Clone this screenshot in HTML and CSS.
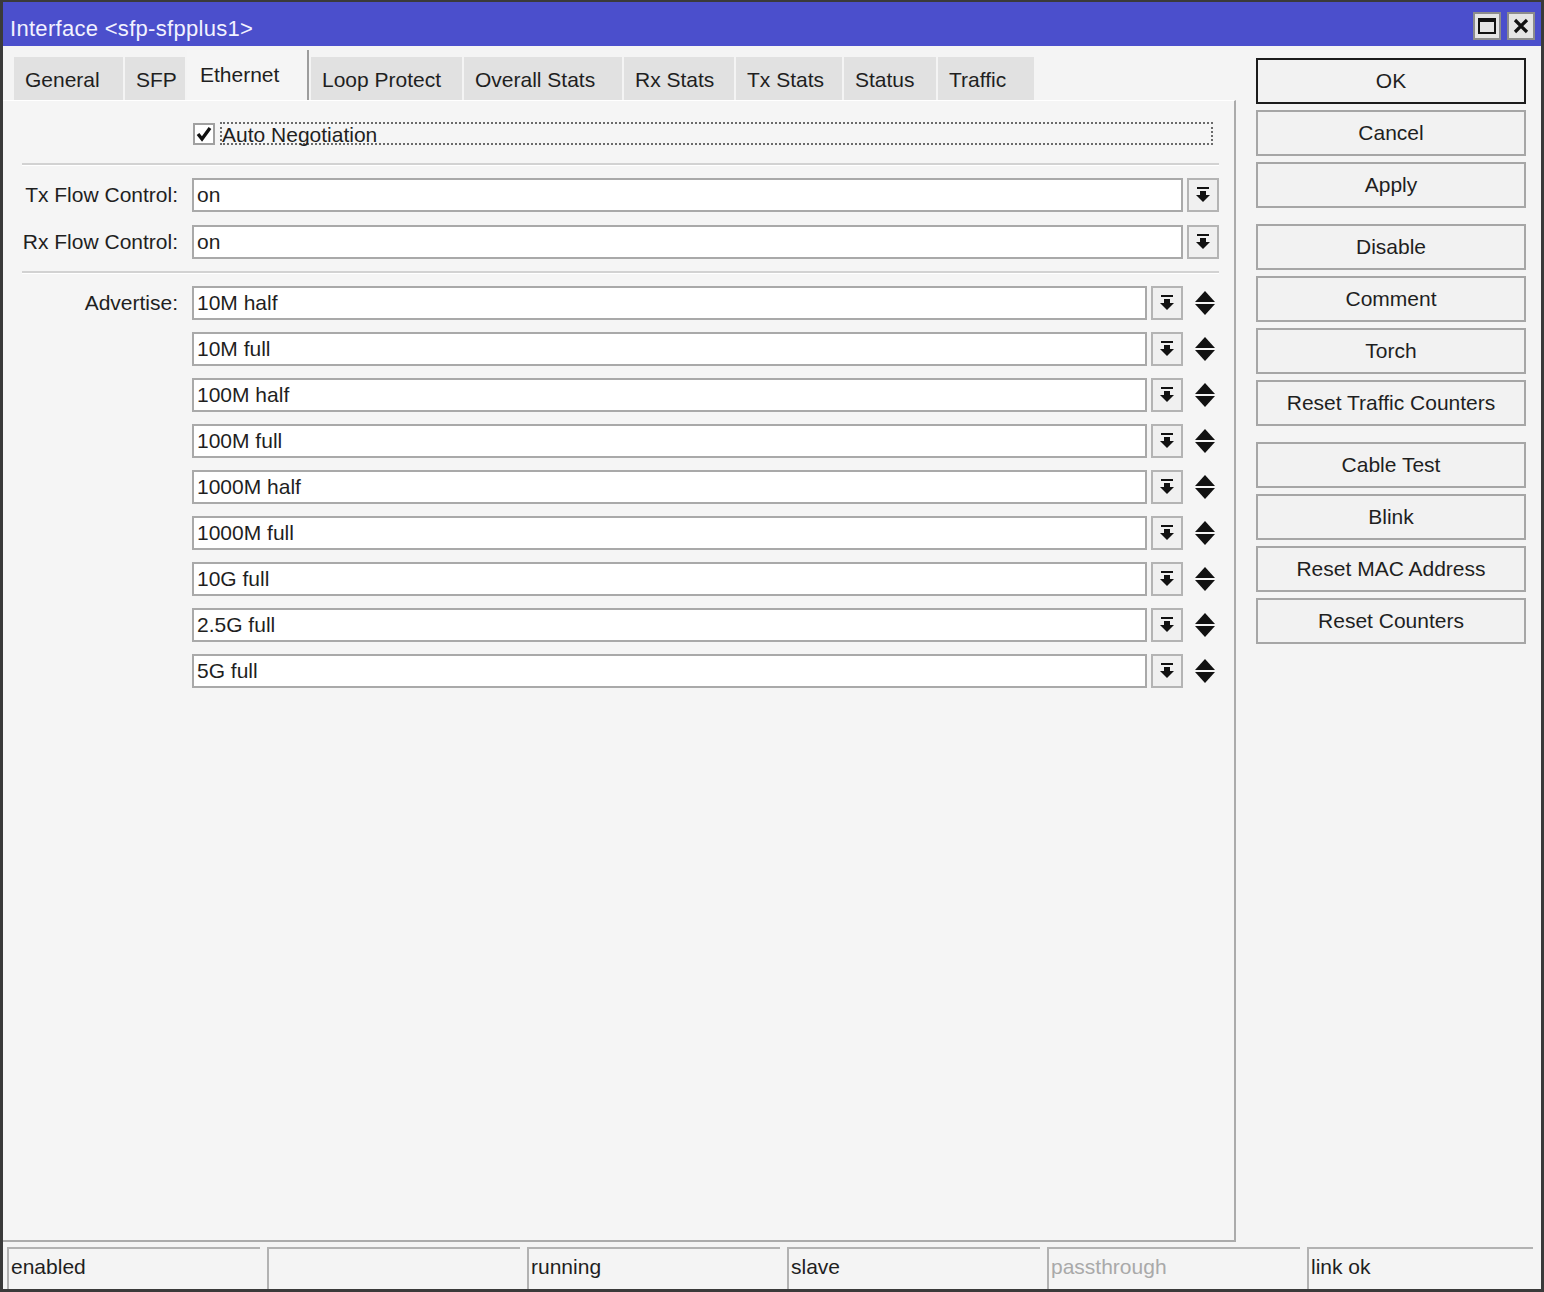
FILE: index.html
```html
<!DOCTYPE html>
<html>
<head>
<meta charset="utf-8">
<link rel="stylesheet" href="styles.css">
</head>
<body>
<div class="window">
  <div class="titlebar">
    <span class="title">Interface &lt;sfp-sfpplus1&gt;</span>
    <div class="tb-btns">
      <span class="tb-btn"><svg width="18" height="16" viewBox="0 0 18 16"><rect x="1" y="1" width="16" height="14" fill="none" stroke="#111" stroke-width="2"/><rect x="1" y="1" width="16" height="3" fill="#111"/></svg></span>
      <span class="tb-btn"><svg width="16" height="16" viewBox="0 0 16 16"><path d="M2 2 L14 14 M14 2 L2 14" stroke="#111" stroke-width="3.2"/></svg></span>
    </div>
  </div>
  <div class="content">
    <div class="main">
      <div class="tabs">
        <div class="tab tab-general">General</div>
        <div class="tab tab-sfp">SFP</div>
        <div class="tab active tab-ethernet">Ethernet</div>
        <div class="tab tab-loop">Loop Protect</div>
        <div class="tab tab-overall">Overall Stats</div>
        <div class="tab tab-rx">Rx Stats</div>
        <div class="tab tab-tx">Tx Stats</div>
        <div class="tab tab-status">Status</div>
        <div class="tab tab-traffic">Traffic</div>
      </div>
      <div class="panel">
        <div class="check-row">
          <span class="checkbox"><svg width="18" height="18" viewBox="0 0 18 18"><path d="M3 9 L7 14 L15 3" fill="none" stroke="#111" stroke-width="3.4"/></svg></span>
          <span class="check-label">Auto Negotiation</span>
        </div>
        <div class="sep"></div>
        <div class="row">
          <span class="label">Tx Flow Control:</span>
          <div class="input">on</div>
          <span class="dd"><svg width="14" height="16" viewBox="0 0 14 16"><rect x="1" y="0" width="12" height="2" fill="#111"/><rect x="4" y="4" width="6" height="4" fill="#111"/><polygon points="0,8 14,8 7,15" fill="#111"/></svg></span>
        </div>
        <div class="row rx">
          <span class="label">Rx Flow Control:</span>
          <div class="input">on</div>
          <span class="dd"><svg width="14" height="16" viewBox="0 0 14 16"><rect x="1" y="0" width="12" height="2" fill="#111"/><rect x="4" y="4" width="6" height="4" fill="#111"/><polygon points="0,8 14,8 7,15" fill="#111"/></svg></span>
        </div>
        <div class="sep sep2"></div>
        <div class="row adv">
          <span class="label">Advertise:</span>
          <div class="input">10M half</div>
          <span class="dd"><svg width="14" height="16" viewBox="0 0 14 16"><rect x="1" y="0" width="12" height="2" fill="#111"/><rect x="4" y="4" width="6" height="4" fill="#111"/><polygon points="0,8 14,8 7,15" fill="#111"/></svg></span>
          <span class="updown"><svg width="20" height="24" viewBox="0 0 20 24"><polygon points="0,11 20,11 10,0" fill="#111"/><polygon points="0,13 20,13 10,24" fill="#111"/></svg></span>
        </div>
        <div class="row adv">
          <span class="label"></span>
          <div class="input">10M full</div>
          <span class="dd"><svg width="14" height="16" viewBox="0 0 14 16"><rect x="1" y="0" width="12" height="2" fill="#111"/><rect x="4" y="4" width="6" height="4" fill="#111"/><polygon points="0,8 14,8 7,15" fill="#111"/></svg></span>
          <span class="updown"><svg width="20" height="24" viewBox="0 0 20 24"><polygon points="0,11 20,11 10,0" fill="#111"/><polygon points="0,13 20,13 10,24" fill="#111"/></svg></span>
        </div>
        <div class="row adv">
          <span class="label"></span>
          <div class="input">100M half</div>
          <span class="dd"><svg width="14" height="16" viewBox="0 0 14 16"><rect x="1" y="0" width="12" height="2" fill="#111"/><rect x="4" y="4" width="6" height="4" fill="#111"/><polygon points="0,8 14,8 7,15" fill="#111"/></svg></span>
          <span class="updown"><svg width="20" height="24" viewBox="0 0 20 24"><polygon points="0,11 20,11 10,0" fill="#111"/><polygon points="0,13 20,13 10,24" fill="#111"/></svg></span>
        </div>
        <div class="row adv">
          <span class="label"></span>
          <div class="input">100M full</div>
          <span class="dd"><svg width="14" height="16" viewBox="0 0 14 16"><rect x="1" y="0" width="12" height="2" fill="#111"/><rect x="4" y="4" width="6" height="4" fill="#111"/><polygon points="0,8 14,8 7,15" fill="#111"/></svg></span>
          <span class="updown"><svg width="20" height="24" viewBox="0 0 20 24"><polygon points="0,11 20,11 10,0" fill="#111"/><polygon points="0,13 20,13 10,24" fill="#111"/></svg></span>
        </div>
        <div class="row adv">
          <span class="label"></span>
          <div class="input">1000M half</div>
          <span class="dd"><svg width="14" height="16" viewBox="0 0 14 16"><rect x="1" y="0" width="12" height="2" fill="#111"/><rect x="4" y="4" width="6" height="4" fill="#111"/><polygon points="0,8 14,8 7,15" fill="#111"/></svg></span>
          <span class="updown"><svg width="20" height="24" viewBox="0 0 20 24"><polygon points="0,11 20,11 10,0" fill="#111"/><polygon points="0,13 20,13 10,24" fill="#111"/></svg></span>
        </div>
        <div class="row adv">
          <span class="label"></span>
          <div class="input">1000M full</div>
          <span class="dd"><svg width="14" height="16" viewBox="0 0 14 16"><rect x="1" y="0" width="12" height="2" fill="#111"/><rect x="4" y="4" width="6" height="4" fill="#111"/><polygon points="0,8 14,8 7,15" fill="#111"/></svg></span>
          <span class="updown"><svg width="20" height="24" viewBox="0 0 20 24"><polygon points="0,11 20,11 10,0" fill="#111"/><polygon points="0,13 20,13 10,24" fill="#111"/></svg></span>
        </div>
        <div class="row adv">
          <span class="label"></span>
          <div class="input">10G full</div>
          <span class="dd"><svg width="14" height="16" viewBox="0 0 14 16"><rect x="1" y="0" width="12" height="2" fill="#111"/><rect x="4" y="4" width="6" height="4" fill="#111"/><polygon points="0,8 14,8 7,15" fill="#111"/></svg></span>
          <span class="updown"><svg width="20" height="24" viewBox="0 0 20 24"><polygon points="0,11 20,11 10,0" fill="#111"/><polygon points="0,13 20,13 10,24" fill="#111"/></svg></span>
        </div>
        <div class="row adv">
          <span class="label"></span>
          <div class="input">2.5G full</div>
          <span class="dd"><svg width="14" height="16" viewBox="0 0 14 16"><rect x="1" y="0" width="12" height="2" fill="#111"/><rect x="4" y="4" width="6" height="4" fill="#111"/><polygon points="0,8 14,8 7,15" fill="#111"/></svg></span>
          <span class="updown"><svg width="20" height="24" viewBox="0 0 20 24"><polygon points="0,11 20,11 10,0" fill="#111"/><polygon points="0,13 20,13 10,24" fill="#111"/></svg></span>
        </div>
        <div class="row adv">
          <span class="label"></span>
          <div class="input">5G full</div>
          <span class="dd"><svg width="14" height="16" viewBox="0 0 14 16"><rect x="1" y="0" width="12" height="2" fill="#111"/><rect x="4" y="4" width="6" height="4" fill="#111"/><polygon points="0,8 14,8 7,15" fill="#111"/></svg></span>
          <span class="updown"><svg width="20" height="24" viewBox="0 0 20 24"><polygon points="0,11 20,11 10,0" fill="#111"/><polygon points="0,13 20,13 10,24" fill="#111"/></svg></span>
        </div>
      </div>
    </div>
    <div class="buttons">
      <div class="btn default">OK</div>
      <div class="btn">Cancel</div>
      <div class="btn">Apply</div>
      <div class="btn gap">Disable</div>
      <div class="btn">Comment</div>
      <div class="btn">Torch</div>
      <div class="btn">Reset Traffic Counters</div>
      <div class="btn gap">Cable Test</div>
      <div class="btn">Blink</div>
      <div class="btn">Reset MAC Address</div>
      <div class="btn">Reset Counters</div>
    </div>
  </div>
  <div class="statusbar">
    <div class="cell">enabled</div>
    <div class="cell"></div>
    <div class="cell">running</div>
    <div class="cell">slave</div>
    <div class="cell muted">passthrough</div>
    <div class="cell">link ok</div>
  </div>
</div>
</body>
</html>
```
FILE: styles.css
```css
* { box-sizing: border-box; }
body {
  margin: 0;
  font-family: "Liberation Sans", Arial, sans-serif;
  font-size: 21px;
  color: #1f1f1f;
}
.window {
  width: 1544px;
  height: 1292px;
  border: 3px solid #3a3a3a;
  border-top-width: 2px;
  background: #f4f4f4;
  display: flex;
  flex-direction: column;
}
.titlebar {
  height: 44px;
  flex: none;
  background: #4b4fcc;
  display: flex;
  align-items: center;
  padding: 4px 6px 0 7px;
}
.title {
  color: #f2f2ff;
  font-size: 22px;
  letter-spacing: 0.3px;
  padding-top: 6px;
}
.tb-btns { margin-left: auto; display: flex; gap: 6px; }
.tb-btn {
  width: 28px;
  height: 28px;
  background: #e4e4e4;
  border: 2px solid #8c8c8c;
  display: flex;
  align-items: center;
  justify-content: center;
}
.content { flex: 1; display: flex; min-height: 0; }
.main { width: 1233px; flex: none; display: flex; flex-direction: column; }
.tabs {
  height: 54px;
  flex: none;
  display: flex;
  align-items: flex-end;
  padding-left: 11px;
}
.tab {
  height: 43px;
  flex: none;
  background: #e1e1e1;
  padding: 3px 0 0 11px;
  margin-right: 2px;
  display: flex;
  align-items: center;
  white-space: nowrap;
}
.tab.active {
  height: 50px;
  background: #f5f5f5;
  padding-top: 0;
  padding-left: 13px;
  border-right: 2px solid #9c9c9c;
}
.tab-general { width: 109px; }
.tab-sfp { width: 60px; }
.tab-ethernet { width: 122px; }
.tab-loop { width: 151px; }
.tab-overall { width: 158px; }
.tab-rx { width: 110px; }
.tab-tx { width: 106px; }
.tab-status { width: 92px; }
.tab-traffic { width: 96px; }
.panel {
  flex: 1;
  background: #f5f5f5;
  border-top: 1px solid #ffffff;
  border-right: 2px solid #ababab;
  border-bottom: 2px solid #ababab;
  padding: 21px 15px 0 0;
  display: flex;
  flex-direction: column;
}
.check-row {
  display: flex;
  align-items: center;
  height: 23px;
  margin-left: 190px;
}
.checkbox {
  width: 22px;
  height: 22px;
  flex: none;
  background: #fff;
  border: 2px solid #a0a0a0;
  display: flex;
  align-items: center;
  justify-content: center;
}
.check-label {
  flex: 1;
  height: 23px;
  margin-left: 5px;
  margin-right: 6px;
  border: 2px dotted #6a6a6a;
  line-height: 22px;
  padding-left: 0;
}
.sep {
  height: 3px;
  flex: none;
  margin-left: 19px;
  margin-top: 18px;
  border-top: 2px solid #d2d2d2;
  border-bottom: 1px solid #ffffff;
}
.sep2 { margin-top: 12px; }
.row {
  display: flex;
  align-items: center;
  height: 34px;
  flex: none;
  margin-top: 12px;
}
.row.rx { margin-top: 13px; }
.label {
  width: 175px;
  flex: none;
  text-align: right;
  margin-right: 14px;
}
.input {
  flex: 1;
  height: 34px;
  background: #ffffff;
  border: 2px solid #a9a9a9;
  padding-left: 3px;
  display: flex;
  align-items: center;
}
.dd {
  width: 32px;
  height: 34px;
  flex: none;
  margin-left: 4px;
  background: #f0f0f0;
  border: 2px solid #b4b4b4;
  display: flex;
  align-items: center;
  justify-content: center;
}
.updown {
  width: 36px;
  flex: none;
  padding-left: 12px;
  display: flex;
  align-items: center;
}
.buttons {
  flex: 1;
  display: flex;
  flex-direction: column;
  gap: 6px;
  padding: 12px 15px 0 20px;
}
.btn {
  height: 46px;
  flex: none;
  background: #f2f2f2;
  border: 2px solid #a6a6a6;
  display: flex;
  align-items: center;
  justify-content: center;
}
.btn.default { border-color: #1c1c1c; }
.btn.gap { margin-top: 10px; }
.statusbar {
  height: 47px;
  flex: none;
  display: grid;
  grid-template-columns: repeat(5, 253px) 1fr;
  column-gap: 7px;
  padding: 5px 8px 0 4px;
}
.cell {
  border-top: 2px solid #b2b2b2;
  border-left: 2px solid #b2b2b2;
  padding: 0 0 5px 2px;
  display: flex;
  align-items: center;
}
.cell.muted { color: #a9a9a9; }
```
